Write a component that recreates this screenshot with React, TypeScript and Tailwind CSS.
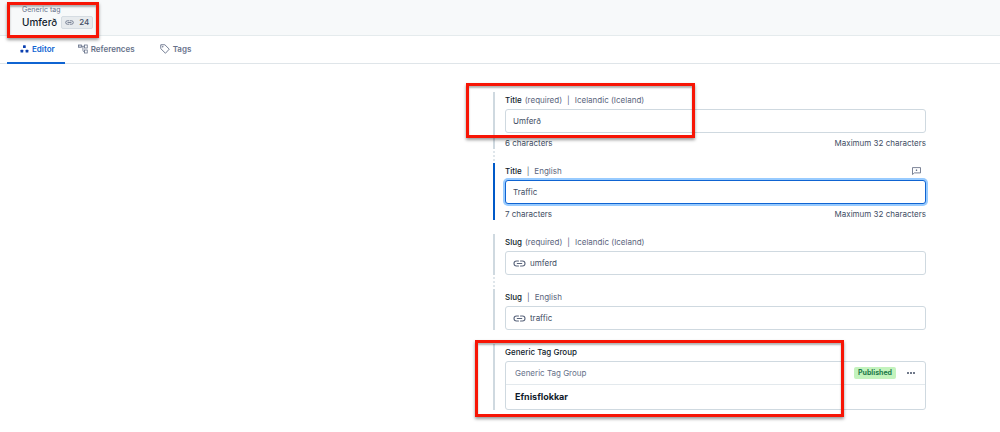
import { useState } from 'react';
import type { ReactNode } from 'react';
import clsx from 'clsx';

interface FieldProps {
  id: string;
  label: string;
  locale?: string;
  required?: boolean;
  active?: boolean;
  continues?: boolean;
  action?: ReactNode;
  children: ReactNode;
}

interface TextFieldProps {
  id: string;
  value: string;
  onChange: (value: string) => void;
  active?: boolean;
}

const MAX_LENGTH = 32;

function LinkIcon({ className }: { className?: string }) {
  return (
    <svg viewBox="0 0 26 14" fill="none" stroke="currentColor" strokeWidth="2.2" strokeLinecap="round" className={className}>
      <path d="M11 2H7a5 5 0 0 0 0 10h4M15 2h4a5 5 0 0 1 0 10h-4M8.5 7h9" />
    </svg>
  );
}

function EditorIcon() {
  return (
    <svg viewBox="0 0 16 16" fill="currentColor" className="h-2 w-[9px] text-[#0a3fb0]">
      <rect x="5" y="0.5" width="5.5" height="5.5" rx="1" />
      <rect x="0" y="9.5" width="5.5" height="5.5" rx="1" />
      <rect x="10.2" y="9.5" width="5.5" height="5.5" rx="1" />
    </svg>
  );
}

function ReferencesIcon() {
  return (
    <svg viewBox="0 0 20 20" fill="none" stroke="currentColor" strokeWidth="1.6" className="h-[10px] w-[10px]">
      <rect x="1" y="2" width="6" height="4.5" fill="currentColor" fillOpacity="0.3" />
      <rect x="13" y="2" width="5.5" height="6" />
      <rect x="13" y="12" width="5.5" height="6" />
      <path d="M7 4.5h6M9.8 4.5v8.2a2.5 2.5 0 0 0 2.5 2.5h0.7" />
    </svg>
  );
}

function TagIcon() {
  return (
    <svg viewBox="0 0 20 20" fill="none" stroke="currentColor" strokeWidth="1.8" strokeLinejoin="round" className="h-[10px] w-[10px]">
      <path d="M1.5 1.5h8.2l8.8 8.8-7.6 8.2-9.4-9.2z" />
      <circle cx="5.6" cy="5.6" r="0.7" fill="currentColor" />
    </svg>
  );
}

function CommentIcon() {
  return (
    <svg viewBox="0 0 18 16" fill="none" stroke="currentColor" strokeWidth="1.6" strokeLinejoin="round" className="h-2 w-[9px]">
      <path d="M1 1.2h16v10.6H4.8L1 15z" />
      <path d="M9 5v3M7.5 6.5h3" />
    </svg>
  );
}

function Highlight({ className }: { className: string }) {
  return (
    <div
      className={clsx(
        'pointer-events-none absolute z-10 border-[3px] border-[#f71505] shadow-[0_2px_3px_rgba(0,0,0,0.4),inset_0_2px_2px_rgba(0,0,0,0.3)]',
        className
      )}
    />
  );
}

function Field({ id, label, locale, required, active, continues, action, children }: FieldProps) {
  return (
    <div className="relative">
      <div className={clsx('border-l-2 pl-[10px]', active ? 'border-[#0059c8]' : 'border-[#cfd9e0]')}>
        <div className="flex h-[17px] items-center justify-between pb-[2px] text-[#5a657c]">
          <div className="flex items-center gap-[3px] whitespace-nowrap">
            <label htmlFor={id} className="font-medium text-[#111b2b]">{label}</label>
            {required && <span>(required)</span>}
            {locale && (
              <>
                <span className="px-[2px]">|</span>
                <span>{locale}</span>
              </>
            )}
          </div>
          {action}
        </div>
        {children}
      </div>
      {continues && (
        <div className="absolute top-full left-0 mt-[2px] h-[10px] border-l-2 border-dotted border-[#dfe6eb]" />
      )}
    </div>
  );
}

function TextField({ id, value, onChange, active }: TextFieldProps) {
  return (
    <>
      <input
        id={id}
        type="text"
        value={value}
        maxLength={MAX_LENGTH}
        onChange={(e) => onChange(e.target.value)}
        className={clsx(
          'block h-6 w-full rounded-[3px] border bg-white px-[7px] text-[#414d63] outline-none',
          active ? 'border-[#0f64d2] shadow-[0_0_0_2px_#98cbff]' : 'border-[#cfd9e0]'
        )}
      />
      <div className="flex h-4 items-end justify-between text-[#414d63]">
        <span>{value.length} characters</span>
        <span>Maximum {MAX_LENGTH} characters</span>
      </div>
    </>
  );
}

function SlugField({ id, value, onChange }: TextFieldProps) {
  return (
    <div className="flex h-6 items-center gap-1 rounded-[3px] border border-[#cfd9e0] bg-white px-[7px] text-[#414d63]">
      <LinkIcon className="h-[7px] w-[13px] shrink-0 text-[#5a657c]" />
      <input
        id={id}
        type="text"
        value={value}
        onChange={(e) => onChange(e.target.value)}
        className="w-full bg-transparent outline-none"
      />
    </div>
  );
}

const tabs = [
  { key: 'editor', label: 'Editor', icon: <EditorIcon />, className: 'pl-[13px] pr-[10px]' },
  { key: 'references', label: 'References', icon: <ReferencesIcon />, className: 'px-[13px]' },
  { key: 'tags', label: 'Tags', icon: <TagIcon />, className: 'px-3' },
];

export default function App() {
  const [activeTab, setActiveTab] = useState('editor');
  const [titleIs, setTitleIs] = useState('Umferð');
  const [titleEn, setTitleEn] = useState('Traffic');
  const [slugIs, setSlugIs] = useState('umferd');
  const [slugEn, setSlugEn] = useState('traffic');

  return (
    <div className="min-h-screen bg-white font-['Inter','Liberation_Sans',sans-serif] text-[8px] leading-3">
      <header className="relative border-b border-[#e5ebed] bg-[#f7f9fa] pt-[5px] pb-[6px] pl-[22px]">
        <Highlight className="top-[2px] left-[7px] h-9 w-[92px]" />
        <p className="text-[7px] leading-[10px] text-[#67728a]">Generic tag</p>
        <div className="flex h-[14px] items-center gap-1">
          <h1 className="text-[10px] font-medium text-[#111b2b]">Umferð</h1>
          <button
            type="button"
            className="flex h-[13px] items-center gap-[5px] rounded-[2px] border border-[#d5dce2] bg-[#e7ebee] px-[3px] font-medium text-[#414d63]"
          >
            <LinkIcon className="h-[5px] w-[9px] text-[#5a657c]" />
            24
          </button>
        </div>
      </header>

      <nav className="flex h-7 border-b border-[#dfe5e9] pl-[7px]">
        {tabs.map((tab) => (
          <button
            key={tab.key}
            type="button"
            onClick={() => setActiveTab(tab.key)}
            className={clsx(
              '-mb-px flex items-center gap-[3px] border-b-2 font-semibold',
              tab.className,
              activeTab === tab.key ? 'border-[#0f64d2] text-[#0f64d2]' : 'border-transparent text-[#67728a]'
            )}
          >
            {tab.icon}
            {tab.label}
          </button>
        ))}
      </nav>

      <main className="mr-[74px] ml-auto flex max-w-[433px] flex-col gap-[14px] pt-7 pb-5">
        <div className="relative">
          <Highlight className="-top-[9px] -left-[27px] h-[55px] w-[229px]" />
          <Field id="title-is" label="Title" locale="Icelandic (Iceland)" required continues>
            <TextField id="title-is" value={titleIs} onChange={setTitleIs} />
          </Field>
        </div>

        <Field
          id="title-en"
          label="Title"
          locale="English"
          active
          action={
            <button type="button" aria-label="Add comment" className="mr-[5px]">
              <CommentIcon />
            </button>
          }
        >
          <TextField id="title-en" value={titleEn} onChange={setTitleEn} active />
        </Field>

        <Field id="slug-is" label="Slug" locale="Icelandic (Iceland)" required continues>
          <SlugField id="slug-is" value={slugIs} onChange={setSlugIs} />
        </Field>

        <Field id="slug-en" label="Slug" locale="English">
          <SlugField id="slug-en" value={slugEn} onChange={setSlugEn} />
        </Field>

        <div className="relative">
          <Highlight className="-top-1 -left-[18px] h-[77px] w-[369px]" />
          <Field id="tag-group" label="Generic Tag Group">
            <article className="rounded-[3px] border border-[#cfd9e0]">
              <div className="flex h-[23px] items-center border-b border-[#e3e9ed] pr-[10px] pl-[9px]">
                <span className="grow text-[#67728a]">Generic Tag Group</span>
                <span className="rounded-[2px] bg-[#c3f3bd] px-1 text-[7px] font-bold text-[#1c7a4a]">Published</span>
                <button id="tag-group" type="button" aria-label="Actions" className="ml-[11px] text-[#414d63]">
                  <svg viewBox="0 0 8 2" fill="currentColor" className="h-[2px] w-2">
                    <circle cx="1" cy="1" r="1" />
                    <circle cx="4" cy="1" r="1" />
                    <circle cx="7" cy="1" r="1" />
                  </svg>
                </button>
              </div>
              <h2 className="flex h-6 items-center pl-[9px] text-[9px] font-bold text-[#111b2b]">Efnisflokkar</h2>
            </article>
          </Field>
        </div>
      </main>
    </div>
  );
}
